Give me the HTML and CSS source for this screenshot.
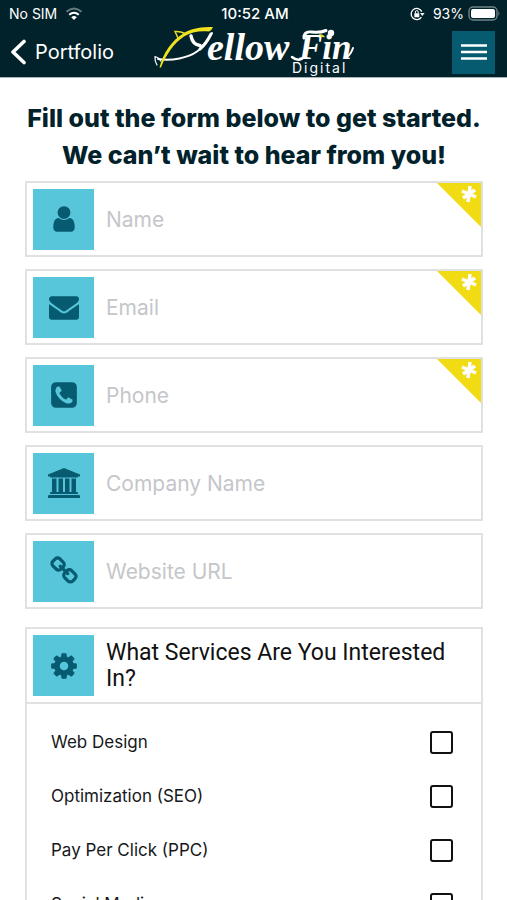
FILE: index.html
```html
<!DOCTYPE html>
<html lang="en">
<head>
<meta charset="utf-8">
<meta name="viewport" content="width=device-width, initial-scale=1">
<title>YellowFin Digital</title>
<link rel="stylesheet" href="styles.css">
</head>
<body>
<div class="app">
  <header class="top">
    <div class="status">
      <div class="status-side">
        <span>No SIM</span>
        <svg width="18" height="14" viewBox="0 0 18 14" fill="none" stroke="#fff" stroke-width="2" aria-hidden="true">
          <path d="M1.5 4.8Q9-1.8 16.5 4.8" opacity=".4"/>
          <path d="M4.2 7.8Q9 3.6 13.8 7.8"/>
          <path d="M9 13 6.2 10.2Q9 8 11.8 10.2Z" fill="#fff" stroke="none"/>
        </svg>
      </div>
      <span class="clock">10:52 AM</span>
      <div class="status-side status-end">
        <svg width="15" height="14" viewBox="0 0 15 14" fill="none" stroke="#fff" aria-hidden="true">
          <path d="M11.8 4.6A5.6 5.6 0 1 0 11.4 10.2" stroke-width="1.3"/>
          <path d="M10 6h4.6l-2.3 3z" fill="#fff" stroke="none"/>
          <rect x="4.3" y="6.2" width="5" height="4" rx=".6" fill="#fff" stroke="none"/>
          <path d="M5.4 6.5V5a1.4 1.4 0 0 1 2.8 0v1.5"/>
        </svg>
        <span>93%</span>
        <svg class="battery" width="33" height="15" viewBox="0 0 33 15" aria-hidden="true">
          <rect x="1" y="1" width="28" height="13" rx="4" fill="none" stroke="#6f8286" stroke-width="1.4"/>
          <rect x="3" y="3" width="24" height="9" rx="2" fill="#fff"/>
          <path d="M30.5 5q2 2.500 0 5z" fill="#6f8286"/>
        </svg>
      </div>
    </div>
    <nav class="bar">
      <a class="back" href="#portfolio">
        <svg width="17" height="26" viewBox="0 0 17 26" fill="none" stroke="#fff" stroke-width="3.600" stroke-linecap="round" stroke-linejoin="round" aria-hidden="true"><path d="M14 2.500 3 13l11 10.500"/></svg>
        Portfolio
      </a>
      <svg class="logo" width="206" height="50" viewBox="0 0 206 50" role="img" aria-label="YellowFin Digital">
        <g fill="none" stroke="#fff" stroke-linecap="round" stroke-linejoin="round">
          <path d="M41 9C42 14 45 18 50 18.500" stroke-width="3.500"/>
          <path d="M62 6C58 11 55 19 47 24.500C38 31 22 34 8 32" stroke-width="2"/>
          <path d="M50 22Q56 17 61 7" stroke-width="3"/>
          <path d="M5 29.500Q10 31 10.500 34M5 29.500Q4.500 34 7 38" stroke-width="1.200"/>
        </g>
        <path d="M28 11 25 4.500Q30 4 35 6.500" fill="none" stroke="#eadb25" stroke-width="1.500"/>
        <path d="M9.500 40.500C13 26 22 13 34 6C42 1 51 0 63 0Q62 3 59 4.500C50 3.500 41 5 34 9.500C24 16 16 28 11 40.500Z" fill="#efe11f"/>
        <text class="logo-name" x="57" y="33">ellow</text>
        <text class="logo-name logo-fin" x="149" y="32">Fin</text>
        <g fill="none" stroke="#fff" stroke-linecap="round">
          <path d="M154 11Q154 4 162 5Q170 6 176 3.500" stroke-width="3"/>
          <path d="M155 29Q149 36 142 30" stroke-width="2.500"/>
          <path d="M197 30Q201 27 203 21" stroke-width="2"/>
        </g>
        <circle cx="181" cy="6" r="3.200" fill="#fff"/>
        <path d="M169 7Q173 7 175 10Q171 11 169 7Z" fill="#eadb25"/>
        <text class="logo-sub" x="142" y="46">Digital</text>
      </svg>
      <button class="menu" type="button" aria-label="Menu">
        <svg width="26" height="18" viewBox="0 0 26 18" stroke="#fff" stroke-width="2.500" aria-hidden="true"><path d="M0 2.500H26M0 9H26M0 15.500H26"/></svg>
      </button>
    </nav>
  </header>

  <main class="page">
    <h1>Fill out the form below to get started. We can’t wait to hear from you!</h1>
    <form class="form">
      <div class="field required">
        <label class="tile" for="name" aria-label="Name"><svg class="icon" viewBox="0 0 1792 1792"><path d="M1536 1399q0 109-62.500 187t-150.500 78h-854q-88 0-150.500-78t-62.500-187q0-85 8.500-160.500t31.500-152 58.500-131 94-89 134.500-34.500q131 128 313 128t313-128q76 0 134.500 34.500t94 89 58.500 131 31.500 152 8.500 160.500zm-256-887q0 159-112.500 271.500t-271.500 112.500-271.500-112.500-112.500-271.500 112.500-271.500 271.500-112.500 271.500 112.500 112.500 271.500z"/></svg></label>
        <input id="name" type="text" placeholder="Name" required>
        <svg class="flag" viewBox="0 0 44 44" aria-hidden="true"><path d="M0 0H44V44Z" fill="#f1dc14"/><path d="M33 3 31 19M25 8l14 6M26 15l12-8" stroke="#fff" stroke-width="3.500"/></svg>
      </div>
      <div class="field required">
        <label class="tile" for="email" aria-label="Email"><svg class="icon" viewBox="0 0 1792 1792"><path d="M1792 710v794q0 66-47 113t-113 47h-1472q-66 0-113-47t-47-113v-794q44 49 101 87 362 246 497 345 57 42 92.500 65.500t94.500 48 110 24.500h2q51 0 110-24.500t94.500-48 92.500-65.500q170-123 498-345 57-39 100-87zm0-294q0 79-49 151t-122 123q-376 261-468 325-10 7-42.500 31t-54 38.800-52 33.200-57.500 27-50 9h-2q-23 0-50-9t-57.500-27-52-33.200-54-38.800-42.500-31q-91-64-262-182.500t-205-142.500q-62-42-117-115.500t-55-136.500q0-78 41.500-130t118.500-52h1472q65 0 112.500 47t47.500 113z"/></svg></label>
        <input id="email" type="email" placeholder="Email" required>
        <svg class="flag" viewBox="0 0 44 44" aria-hidden="true"><path d="M0 0H44V44Z" fill="#f1dc14"/><path d="M33 3 31 19M25 8l14 6M26 15l12-8" stroke="#fff" stroke-width="3.500"/></svg>
      </div>
      <div class="field required">
        <label class="tile" for="phone" aria-label="Phone"><svg class="icon" viewBox="0 0 1792 1792"><path d="M1408 1193q0-11-2-16-3-8-38.500-29.500t-88.500-49.500l-53-29q-5-3-19-13t-25-15-21-5q-18 0-47 32.500t-57 65.500-44 33q-7 0-16.500-3.500t-15.500-6.500-17-9.500-14-8.500q-99-55-170.500-126.500t-126.500-170.500q-2-3-8.500-14t-9.500-17-6.500-15.500-3.500-16.500q0-13 20.500-33.500t45-38.500 45-39.500 20.500-36.500q0-10-5-21t-15-25-13-19q-3-6-15-28.500t-25-45.500-26.500-47.500-25-40.500-16.500-18-16-2q-48 0-101 22-46 21-80 94.500t-34 130.500q0 16 2.500 34t5 30.500 9 33 10 29.500 12.500 33 11 30q60 164 216.500 320.500t320.500 216.500q6 2 30 11t33 12.500 29.500 10 33 9 30.500 5 34 2.500q57 0 130.500-34t94.500-80q22-53 22-101zm256-777v960q0 119-84.500 203.500t-203.500 84.500h-960q-119 0-203.500-84.500t-84.500-203.500v-960q0-119 84.500-203.500t203.500-84.500h960q119 0 203.500 84.500t84.500 203.500z"/></svg></label>
        <input id="phone" type="tel" placeholder="Phone" required>
        <svg class="flag" viewBox="0 0 44 44" aria-hidden="true"><path d="M0 0H44V44Z" fill="#f1dc14"/><path d="M33 3 31 19M25 8l14 6M26 15l12-8" stroke="#fff" stroke-width="3.500"/></svg>
      </div>
      <div class="field">
        <label class="tile" for="company" aria-label="Company Name"><svg class="icon icon-wide" viewBox="0 0 32 30"><path d="M16 0 32 6.500V8.500H30Q30 9.500 29 9.500H3Q2 9.500 2 8.500H0V6.500ZM4 10.500H8.500V24H10.500V10.500H15V24H17V10.500H21.500V24H23.500V10.500H28V24H29Q30 24 30 25V26H2V25Q2 24 3 24H4ZM1 27H31Q32 27 32 28V30H0V28Q0 27 1 27Z"/></svg></label>
        <input id="company" type="text" placeholder="Company Name">
      </div>
      <div class="field">
        <label class="tile" for="site" aria-label="Website URL"><svg class="icon" viewBox="0 0 1792 1792"><path d="M1520 1216q0-40-28-68l-208-208q-28-28-68-28-42 0-72 32 3 3 19 18.500t21.500 21.500 15 19 13 25.500 3.500 27.500q0 40-28 68t-68 28q-15 0-27.500-3.500t-25.500-13-19-15-21.500-21.500-18.500-19q-33 31-33 73 0 40 28 68l206 207q27 27 68 27 40 0 68-26l147-146q28-28 28-67zm-703-705q0-40-28-68l-206-207q-28-28-68-28-39 0-68 27l-147 146q-28 28-28 67 0 40 28 68l208 208q27 27 68 27 42 0 72-31-3-3-19-18.500t-21.500-21.500-15-19-13-25.500-3.500-27.500q0-40 28-68t68-28q15 0 27.500 3.500t25.500 13 19 15 21.500 21.500 18.500 19q33-31 33-73zm895 705q0 120-85 203l-147 146q-83 83-203 83-121 0-204-85l-206-207q-83-83-83-203 0-123 88-209l-88-88q-86 88-208 88-120 0-204-84l-208-208q-84-84-84-204t85-203l147-146q83-83 203-83 121 0 204 85l206 207q83 83 83 203 0 123-88 209l88 88q86-88 208-88 120 0 204 84l208 208q84 84 84 204z"/></svg></label>
        <input id="site" type="url" placeholder="Website URL">
      </div>

      <section class="services" aria-labelledby="services-title">
        <div class="services-head">
          <span class="tile"><svg class="icon" viewBox="0 0 1792 1792" aria-hidden="true"><path d="M1152 896q0-106-75-181t-181-75-181 75-75 181 75 181 181 75 181-75 75-181zm512-109v222q0 12-8 23t-20 13l-185 28q-19 54-39 91 35 50 107 138 10 12 10 25t-9 23q-27 37-99 108t-94 71q-12 0-26-9l-138-108q-44 23-91 38-16 136-29 186-7 28-36 28h-222q-14 0-24.500-8.500t-11.500-21.500l-28-184q-49-16-90-37l-141 107q-10 9-25 9-14 0-25-11-126-114-165-168-7-10-7-23 0-12 8-23 15-21 51-66.500t54-70.500q-27-50-41-99l-183-27q-13-2-21-12.500t-8-23.500v-222q0-12 8-23t19-13l186-28q14-46 39-92-40-57-107-138-10-12-10-24 0-10 9-23 26-36 98.500-107.500t94.500-71.500q13 0 26 10l138 107q44-23 91-38 16-136 29-186 7-28 36-28h222q14 0 24.500 8.500t11.500 21.500l28 184q49 16 90 37l142-107q9-9 24-9 13 0 25 10 129 119 165 170 7 8 7 22 0 12-8 23-15 21-51 66.500t-54 70.500q26 50 41 98l183 28q13 2 21 12.500t8 23.500z"/></svg></span>
          <h2 id="services-title">What Services Are You Interested In?</h2>
        </div>
        <div class="options">
          <label class="option">Web Design <input type="checkbox"></label>
          <label class="option">Optimization (SEO) <input type="checkbox"></label>
          <label class="option">Pay Per Click (PPC) <input type="checkbox"></label>
          <label class="option">Social Media <input type="checkbox"></label>
        </div>
      </section>
    </form>
  </main>
</div>
</body>
</html>
```
FILE: styles.css
```css
* {
  box-sizing: border-box;
}

body {
  margin: 0;
  background: #fff;
  color: #16181a;
  font-family: Inter, "Liberation Sans", sans-serif;
}

.app {
  display: flex;
  flex-direction: column;
  height: 100vh;
}

.top {
  flex: none;
  background: #01222b;
  border-bottom: 1px solid #a9b3b6;
  color: #fff;
}

.status {
  display: grid;
  grid-template-columns: 1fr auto 1fr;
  align-items: center;
  height: 27px;
  padding: 0 6px 0 9px;
  font-size: 14px;
}

.status-side {
  display: flex;
  align-items: center;
  gap: 8px;
}

.status-end {
  justify-content: flex-end;
}

.battery {
  margin-left: -4px;
}

.clock {
  font-size: 15px;
  font-weight: 500;
}

.bar {
  display: grid;
  grid-template-columns: 1fr auto 1fr;
  align-items: center;
  height: 50px;
  padding: 0 12px 0 10px;
}

.back {
  display: flex;
  align-items: center;
  gap: 8px;
  color: #fff;
  font-size: 20px;
  text-decoration: none;
}

.logo {
  display: block;
  overflow: visible;
}

.logo text {
  fill: #fff;
}

.logo-name {
  font: italic bold 38px "Liberation Serif", serif;
}

.logo-fin {
  font-size: 35px;
}

.logo-sub {
  font: 14px Inter, sans-serif;
  letter-spacing: 2px;
}

.menu {
  display: flex;
  align-items: center;
  justify-content: center;
  justify-self: end;
  width: 43px;
  height: 43px;
  padding: 0;
  border: 0;
  background: #075b70;
}

.page {
  flex: 1;
  min-height: 0;
  padding: 22px 24px 0 25px;
  overflow-y: auto;
  scrollbar-width: none;
}

h1 {
  margin: 0 -12px 7px;
  color: #01222b;
  font-size: 25px;
  font-weight: 800;
  line-height: 37px;
  text-align: center;
  text-wrap: balance;
}

.form {
  display: flex;
  flex-direction: column;
  gap: 12px;
}

.field,
.services {
  border: 2px solid #dfe1e2;
}

.field {
  position: relative;
  display: flex;
  align-items: center;
  gap: 12px;
  height: 76px;
  padding-left: 6px;
}

.tile {
  display: flex;
  flex: none;
  align-items: center;
  justify-content: center;
  width: 61px;
  height: 61px;
  background: #58c6da;
}

.icon {
  width: 30px;
  height: 30px;
  fill: #075b70;
}

.icon-wide {
  width: 32px;
}

.field input {
  flex: 1;
  min-width: 0;
  height: 60px;
  padding: 0;
  border: 0;
  outline: 0;
  background: none;
  color: #16181a;
  font: 21px Inter, "Liberation Sans", sans-serif;
}

.field input::placeholder {
  color: #c5c6ca;
  opacity: 1;
}

.flag {
  position: absolute;
  top: 0;
  right: 0;
  width: 44px;
  height: 44px;
}

.services {
  margin-top: 6px;
}

.services-head {
  display: flex;
  align-items: center;
  gap: 12px;
  height: 75px;
  padding: 0 24px 0 6px;
  border-bottom: 2px solid #dfe1e2;
}

h2 {
  margin: 0;
  color: #111;
  font: 23px/26px Roboto, sans-serif;
}

.options {
  padding: 11px 28px 11px 24px;
}

.option {
  display: flex;
  align-items: center;
  justify-content: space-between;
  height: 54px;
  font-size: 17px;
}

.option input {
  width: 23px;
  height: 23px;
  margin: 0;
  border: 2px solid #111;
  border-radius: 3px;
  appearance: none;
}

.option input:checked {
  background: #075b70;
}
```
